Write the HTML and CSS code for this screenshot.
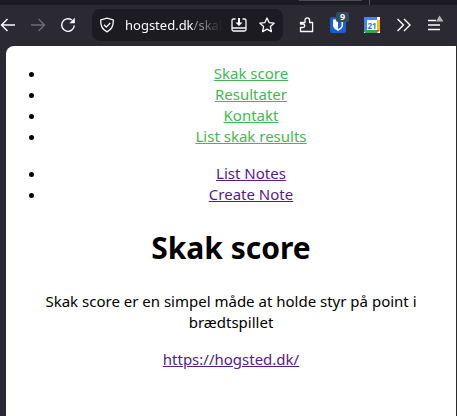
FILE: index.html
```html
<!DOCTYPE html>
<html lang="da">
<head>
<meta charset="utf-8">
<title>Skak score</title>
<link rel="stylesheet" href="styles.css">
</head>
<body>
<div class="tabstrip"><span class="tabedge"></span><span class="tabsep"></span></div>
<div class="toolbar">
  <div class="nav">
    <svg class="ic" viewBox="0 0 16 16"><path d="M15 8H2M7.500 2 1.500 8l6 6" fill="none" stroke="#fbfbfe" stroke-width="1.400"/></svg>
    <svg class="ic" viewBox="0 0 16 16"><path d="M1 8h13M8.500 2l6 6-6 6" fill="none" stroke="#6d6c74" stroke-width="1.400"/></svg>
    <svg class="ic" viewBox="0 0 16 16"><path d="M14.300 8.500A6.300 6.300 0 1 1 11.800 3" fill="none" stroke="#fbfbfe" stroke-width="1.400"/><path d="M14.800 .8v5.400H9.400z" fill="#fbfbfe"/></svg>
  </div>
  <div class="urlbar">
    <svg class="shield" viewBox="0 0 16 16"><path d="M8 1.200 14.300 3c.3 5.500-1.500 9.500-6.300 11.800C3.200 12.500 1.400 8.500 1.700 3z" fill="none" stroke="#fbfbfe" stroke-width="1.300"/><path d="m5 7.800 2.300 2.300L11.200 6" fill="none" stroke="#fbfbfe" stroke-width="1.300"/></svg>
    <span class="url"><span class="host">hogsted.dk</span><span class="path">/skak</span></span>
    <svg class="pageic download" viewBox="0 0 16 16"><path d="M4.500 2H2.500Q1 2 1 3.500v9Q1 14 2.500 14h11q1.500 0 1.500-1.500v-9Q15 2 13.500 2h-2M1 11h14" fill="none" stroke="#fbfbfe" stroke-width="1.300"/><path d="M7 1h2v4.500h2.500L8 9 4.500 5.500H7z" fill="#fbfbfe"/></svg>
    <svg class="pageic star" viewBox="0 0 16 16"><path d="m8 1 2.100 4.600 5 .6-3.700 3.400 1 5L8 12.100 3.600 14.600l1-5L.9 6.200l5-.6z" fill="none" stroke="#fbfbfe" stroke-width="1.300" stroke-linejoin="round"/></svg>
  </div>
  <div class="tools">
    <svg class="ic" viewBox="0 0 16 16"><path d="M1.500 14.500V10.500H4a1.700 1.700 0 0 0 0-3.500H1.500V5.500h4.500V3.200a2.300 2.300 0 0 1 4.600 0v2.300h3v9z" fill="none" stroke="#fbfbfe" stroke-width="1.300" stroke-linejoin="round"/></svg>
    <div class="bitwarden">
      <svg viewBox="0 0 16 16"><rect width="16" height="16" rx="2.500" fill="#175ddc"/><path d="M3 2.500h10v6c0 2.500-2.500 4-5 5.500-2.500-1.500-5-3-5-5.500z" fill="#fff"/><path d="M8 4h3.500v4.500c0 1.500-1.500 2.500-3.500 3.700z" fill="#175ddc"/></svg>
      <span class="badge">9</span>
    </div>
    <svg class="ic cal" viewBox="0 0 16 16"><rect width="16" height="16" fill="#fff"/><path d="M0 0h13v3H3v10H0z" fill="#4285f4"/><path d="M13 3h3v10h-3z" fill="#fbbc04"/><path d="M0 13h13v3H1.500L0 14.500z" fill="#34a853"/><path d="M13 13h3l-3 3z" fill="#ea4335"/><text x="8" y="11.500" class="caltext">21</text></svg>
    <svg class="ic" viewBox="0 0 16 16"><path d="m1.500 2 6 6-6 6M8 2l6 6-6 6" fill="none" stroke="#fbfbfe" stroke-width="1.400"/></svg>
    <svg class="menu" viewBox="0 0 18 20"><path d="M0 5.500h8M0 10h12M0 14.500h12" stroke="#fbfbfe" stroke-width="1.400"/><path d="M8 6.500 11.500 .5 15.500 6.500z" fill="#b5b5b8"/></svg>
  </div>
</div>
<div class="viewport">
  <main class="page">
    <ul class="menu-list green">
      <li><a href="#">Skak score</a></li>
      <li><a href="#">Resultater</a></li>
      <li><a href="#">Kontakt</a></li>
      <li><a href="#">List skak results</a></li>
    </ul>
    <ul class="menu-list purple">
      <li><a href="#">List Notes</a></li>
      <li><a href="#">Create Note</a></li>
    </ul>
    <h1>Skak score</h1>
    <p>Skak score er en simpel måde at holde styr på point i brædtspillet</p>
    <p><a class="visited" href="#">https://hogsted.dk/</a></p>
  </main>
</div>
</body>
</html>
```
FILE: styles.css
```css
html, body {
  margin: 0;
  height: 100%;
  overflow: hidden;
}
body {
  display: flex;
  flex-direction: column;
  background: #2b2a33;
  font-family: "Noto Sans", sans-serif;
}
.tabstrip {
  height: 5px;
  flex: none;
  background: #1c1b22;
  position: relative;
}
.tabedge {
  position: absolute;
  left: 299px;
  top: 0;
  width: 63px;
  height: 1px;
  background: #4a4950;
}
.tabsep {
  position: absolute;
  left: 369px;
  top: 0;
  width: 1px;
  height: 5px;
  background: #55545b;
}
.toolbar {
  height: 40px;
  margin-bottom: 1px;
  flex: none;
  display: flex;
  align-items: center;
}
.nav {
  display: flex;
  align-items: center;
  gap: 14px;
  width: 92px;
  flex: none;
}
.ic {
  width: 16px;
  height: 16px;
  flex: none;
}
.urlbar {
  width: 191px;
  height: 32px;
  flex: none;
  background: #1c1b22;
  border-radius: 8px;
  display: flex;
  align-items: center;
  box-sizing: border-box;
  padding: 0 8px 0 7px;
  overflow: hidden;
}
.shield {
  width: 16px;
  height: 16px;
  flex: none;
  margin-right: 10px;
}
.url {
  font-size: 13px;
  width: 97px;
  overflow: hidden;
  white-space: nowrap;
  flex: none;
  -webkit-mask-image: linear-gradient(to right, #000 80%, transparent);
  mask-image: linear-gradient(to right, #000 80%, transparent);
}
.host {
  color: #fbfbfe;
}
.path {
  color: #8f8f95;
}
.pageic {
  width: 16px;
  height: 16px;
  flex: none;
}
.download {
  margin-left: 9px;
}
.star {
  margin-left: 12px;
}
.tools {
  display: flex;
  align-items: center;
  margin-left: 16px;
  gap: 16px;
}
.bitwarden {
  width: 16px;
  height: 16px;
  position: relative;
  flex: none;
  margin-left: -1px;
}
.bitwarden svg {
  display: block;
  width: 16px;
  height: 16px;
}
.badge {
  position: absolute;
  left: 6px;
  top: -5px;
  width: 13px;
  height: 10px;
  background: #2f4d5c;
  border-radius: 2px;
  color: #fff;
  font-size: 9px;
  font-weight: 700;
  line-height: 10px;
  text-align: center;
}
.cal {
  margin-left: 2px;
}
.caltext {
  font-family: "Noto Sans", sans-serif;
  font-size: 8px;
  font-weight: 700;
  fill: #3b78e7;
  text-anchor: middle;
}
.menu {
  width: 18px;
  height: 20px;
  flex: none;
}
.viewport {
  flex: 1;
  min-height: 0;
  padding: 0 1px 0 6px;
}
.page {
  height: 100%;
  background: #fff;
  border-top-left-radius: 8px;
  padding-top: 17px;
  box-sizing: border-box;
  text-align: center;
  color: #000;
  font-size: 15px;
  line-height: 21px;
}
.menu-list {
  margin: 0 0 16px;
  padding-left: 40px;
}
.green a {
  color: #3fb950;
}
.purple a,
.visited {
  color: #551a8b;
}
h1 {
  font-size: 30px;
  line-height: 42px;
  font-weight: 700;
  margin: 22px 0 22px;
}
p {
  margin: 16px 0;
}
```
